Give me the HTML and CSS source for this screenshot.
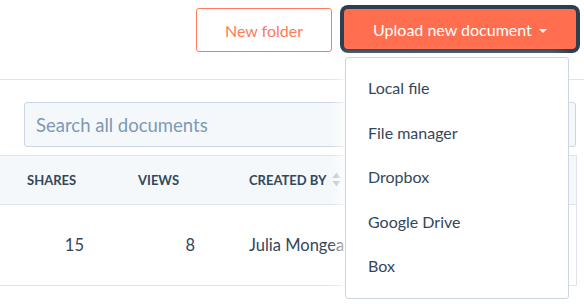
FILE: index.html
```html
<!DOCTYPE html>
<html>
	<head>
		<meta charset="UTF-8" />
		<title>Documents</title>
		<link rel="stylesheet" href="styles.css">
	</head>
	<body>
		<div class="toolbar">
			<button class="btn btn-secondary">New folder</button>
			<div class="upload">
				<button class="btn btn-primary">Upload new document <span class="caret"></span></button>
				<ul class="menu">
					<li>Local file</li>
					<li>File manager</li>
					<li>Dropbox</li>
					<li>Google Drive</li>
					<li>Box</li>
				</ul>
			</div>
		</div>

		<div class="content">
			<div class="search">
				<input type="text" placeholder="Search all documents" />
			</div>
			<table class="docs">
				<thead>
					<tr>
						<th class="col-shares">Shares</th>
						<th class="col-views">Views</th>
						<th class="col-author">Created by
							<svg class="sort" width="9" height="15" viewBox="0 0 9 15">
								<path d="M4.5 0.5 L8.5 6 L0.5 6 Z" />
								<path d="M0.5 9 L8.5 9 L4.5 14.5 Z" />
							</svg>
						</th>
					</tr>
				</thead>
				<tbody>
					<tr>
						<td class="num">15</td>
						<td class="num">8</td>
						<td>Julia Mongeau</td>
					</tr>
				</tbody>
			</table>
		</div>
	</body>
</html>
```

FILE: styles.css
```css
* {
	box-sizing: border-box;
	font-family: Lato, "Noto Sans", sans-serif;
}

html,
body {
	margin: 0;
	min-height: 307px;
	background-color: #fff;
	color: #33475b;
}

html {
	overflow: hidden;
}

.toolbar {
	display: flex;
	justify-content: flex-end;
	align-items: flex-start;
	height: 80px;
	padding: 8px 8px 0 0;
	border-bottom: 1px solid #dfe3eb;
}

.btn {
	font-size: 16px;
	border-radius: 3px;
	cursor: pointer;
}

.btn-secondary {
	width: 136px;
	height: 44px;
	margin-right: 12px;
	background: #fff;
	border: 1px solid #ff7a59;
	color: #ff7a59;
}

.upload {
	position: relative;
}

.btn-primary {
	width: 232px;
	height: 40px;
	margin-top: 1px;
	background: #ff6e4e;
	border: 0;
	color: #fff;
	border-radius: 4px;
	box-shadow: 0 0 0 4px #2d3e50;
}

.caret {
	display: inline-block;
	margin-left: 3px;
	vertical-align: 3px;
	border-left: 4px solid transparent;
	border-right: 4px solid transparent;
	border-top: 4px solid #fff;
}

.menu {
	position: absolute;
	top: 49px;
	left: 1px;
	z-index: 2;
	width: 224px;
	margin: 0;
	padding: 9px 0 8px;
	list-style: none;
	background: #fff;
	border: 1px solid #cbd6e2;
	border-radius: 3px;
	box-shadow: -6px 0 12px 0 rgba(255, 255, 255, 0.8);
}

.menu li {
	height: 44.5px;
	padding: 11px 22px;
	font-size: 16px;
}

.content {
	padding-top: 22px;
}

.search {
	padding: 0 8px 0 24px;
}

.search input {
	width: 100%;
	height: 45px;
	padding: 0 11px;
	font-size: 18.5px;
	background: #f5f8fa;
	border: 1px solid #cbd6e2;
	border-radius: 3px;
	color: #33475b;
}

.search input::placeholder {
	color: #7c98b6;
}

.docs {
	width: 577px;
	margin-top: 8px;
	border-collapse: collapse;
	border-right: 1px solid #dfe3eb;
}

.docs th {
	height: 49px;
	padding: 0;
	text-align: left;
	font-size: 13px;
	font-weight: 700;
	text-transform: uppercase;
	white-space: nowrap;
	background: #f5f8fa;
	border-top: 1px solid #dfe3eb;
	border-bottom: 1px solid #dfe3eb;
}

.col-shares {
	width: 138px;
	padding-left: 27px !important;
}

.col-views {
	width: 111px;
}

.sort {
	margin-left: 3px;
	vertical-align: -2px;
	fill: #b6c5d6;
}

.docs td {
	height: 81px;
	padding: 0;
	font-size: 16.5px;
	border-bottom: 1px solid #dfe3eb;
	white-space: nowrap;
}

.docs td.num {
	text-align: right;
	padding-right: 54px;
}
```
